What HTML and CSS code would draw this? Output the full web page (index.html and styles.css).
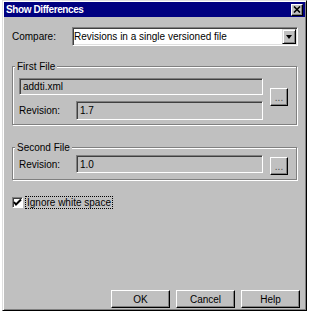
FILE: index.html
```html
<!DOCTYPE html>
<html lang="en">

<head>
    <meta charset="UTF-8">
    <meta name="viewport" content="width=device-width, initial-scale=1.0">
    <title>Show Differences</title>
    <link rel="stylesheet" href="styles.css">
</head>

<body>
    <div class="dialog">
        <div class="titlebar">
            <span class="title">Show Differences</span>
            <span class="close">
                <svg width="8" height="7" viewBox="0 0 8 7">
                    <path d="M1 0.5 L7 6.5 M7 0.5 L1 6.5" stroke="#000" stroke-width="1.6" fill="none" />
                </svg>
            </span>
        </div>

        <div class="content">
            <div class="compare-row">
                <span class="label label-compare">Compare:</span>
                <div class="combo">
                    <span class="combo-text">Revisions in a single versioned file</span>
                    <span class="combo-arrow"><span class="arrow"></span></span>
                </div>
            </div>

            <fieldset class="group group-first">
                <legend>First File</legend>
                <div class="group-inner">
                    <div class="fields">
                        <div class="field field-wide">addti.xml</div>
                        <div class="field-row">
                            <span class="label label-rev">Revision:</span>
                            <div class="field field-rev">1.7</div>
                        </div>
                    </div>
                    <button class="browse browse-first">...</button>
                </div>
            </fieldset>

            <fieldset class="group group-second">
                <legend>Second File</legend>
                <div class="group-inner">
                    <div class="fields">
                        <div class="field-row">
                            <span class="label label-rev">Revision:</span>
                            <div class="field field-rev field-short">1.0</div>
                        </div>
                    </div>
                    <button class="browse browse-second">...</button>
                </div>
            </fieldset>

            <div class="check-row">
                <span class="checkbox">
                    <svg width="9" height="9" viewBox="0 0 9 9">
                        <path d="M1 4 L3 6.5 L8 1.5" stroke="#000" stroke-width="2" fill="none" />
                    </svg>
                </span>
                <span class="check-label">Ignore white space</span>
            </div>

            <div class="buttons">
                <button class="btn">OK</button>
                <button class="btn">Cancel</button>
                <button class="btn">Help</button>
            </div>
        </div>
    </div>
</body>

</html>
```

FILE: styles.css
```css
/* Estilos generales */
body {
    margin: 0;
    padding: 0;
    background-color: #fff;
    font-family: "Liberation Sans", Arial, sans-serif;
    font-size: 10px;
    color: #000;
}

.dialog {
    width: 305px;
    height: 311px;
    margin-left: 2px;
    padding: 1px;
    box-sizing: border-box;
    display: flex;
    flex-direction: column;
    background-color: #c0c0c0;
    border: 1px solid;
    border-color: #dfdfdf #000 #000 #dfdfdf;
    box-shadow: inset 1px 1px #fff, inset -1px -1px #808080;
}

/* Barra de título */
.titlebar {
    height: 15px;
    flex: none;
    display: flex;
    align-items: center;
    justify-content: space-between;
    padding: 0 2px;
    background-color: #000080;
    color: #fff;
}

.title {
    font-weight: bold;
    letter-spacing: -0.4px;
}

.close {
    width: 12px;
    height: 12px;
    box-sizing: border-box;
    display: flex;
    align-items: center;
    justify-content: center;
    background-color: #c0c0c0;
    border: 1px solid;
    border-color: #fff #000 #000 #fff;
    box-shadow: inset -1px -1px #808080;
}

.content {
    flex: 1;
    display: flex;
    flex-direction: column;
    padding: 10px 7px 1px 8px;
}

.label {
    flex: none;
}

/* Compare */
.compare-row {
    display: flex;
    align-items: center;
    height: 19px;
}

.label-compare {
    width: 60px;
}

.combo {
    flex: 1;
    height: 19px;
    box-sizing: border-box;
    display: flex;
    align-items: center;
    background-color: #fff;
    border: 1px solid;
    border-color: #808080 #fff #fff #808080;
    box-shadow: inset 1px 1px #404040, inset -1px -1px #dfdfdf;
}

.combo-text {
    flex: 1;
    padding-left: 1px;
}

.combo-arrow {
    width: 14px;
    height: 15px;
    margin-right: 1px;
    box-sizing: border-box;
    display: flex;
    align-items: center;
    justify-content: center;
    background-color: #c0c0c0;
    border: 1px solid;
    border-color: #dfdfdf #000 #000 #dfdfdf;
    box-shadow: inset 1px 1px #fff, inset -1px -1px #808080;
}

.arrow {
    width: 0;
    height: 0;
    border-left: 3px solid transparent;
    border-right: 3px solid transparent;
    border-top: 4px solid #000;
}

/* Grupos */
.group {
    margin: 13px 1px 0 0;
    padding: 5px 8px 4px 6px;
    min-width: 0;
    border: 1px solid #808080;
    box-shadow: inset 1px 1px #fff, 1px 1px #fff;
}

.group legend {
    padding: 2px 2px 0;
    margin-left: -4px;
    line-height: 12px;
    background-color: #c0c0c0;
}

.group-second {
    margin-top: 15px;
    padding-top: 1px;
}

.group-inner {
    display: flex;
    align-items: flex-start;
}

.fields {
    flex: 1;
    display: flex;
    flex-direction: column;
    gap: 6px;
}

.field-row {
    display: flex;
    align-items: center;
}

.label-rev {
    width: 57px;
}

.field {
    height: 17px;
    box-sizing: border-box;
    display: flex;
    align-items: center;
    padding-left: 3px;
    border: 1px solid;
    border-color: #808080 #fff #fff #808080;
    box-shadow: inset 1px 1px #404040;
}

.field-rev {
    flex: 1;
    height: 19px;
}

.field-short {
    height: 18px;
}

.browse {
    width: 18px;
    height: 18px;
    margin-left: 7px;
    padding: 0;
    font-family: inherit;
    font-size: 10px;
    color: #505050;
    background-color: #c0c0c0;
    border: 1px solid;
    border-color: #fff #000 #000 #fff;
    box-shadow: inset -1px -1px #808080;
}

.browse-first {
    margin-top: 10px;
}

.browse-second {
    margin-top: 2px;
}

/* Casilla */
.check-row {
    display: flex;
    align-items: center;
    height: 13px;
    margin-top: 16px;
}

.checkbox {
    width: 11px;
    height: 11px;
    box-sizing: border-box;
    display: flex;
    align-items: center;
    justify-content: center;
    background-color: #fff;
    border: 1px solid;
    border-color: #808080 #fff #fff #808080;
    box-shadow: inset 1px 1px #404040;
}

.check-label {
    margin-left: 2px;
    padding: 0 1px;
    line-height: 11px;
    border: 1px dotted #000;
}

/* Botones */
.buttons {
    margin-top: auto;
    margin-right: -2px;
    display: flex;
    justify-content: flex-end;
    gap: 6px;
}

.btn {
    width: 59px;
    height: 18px;
    padding: 0;
    font-family: inherit;
    font-size: 10px;
    color: #000;
    background-color: #c0c0c0;
    border: 1px solid;
    border-color: #fff #000 #000 #fff;
    box-shadow: inset -1px -1px #808080;
}
```
